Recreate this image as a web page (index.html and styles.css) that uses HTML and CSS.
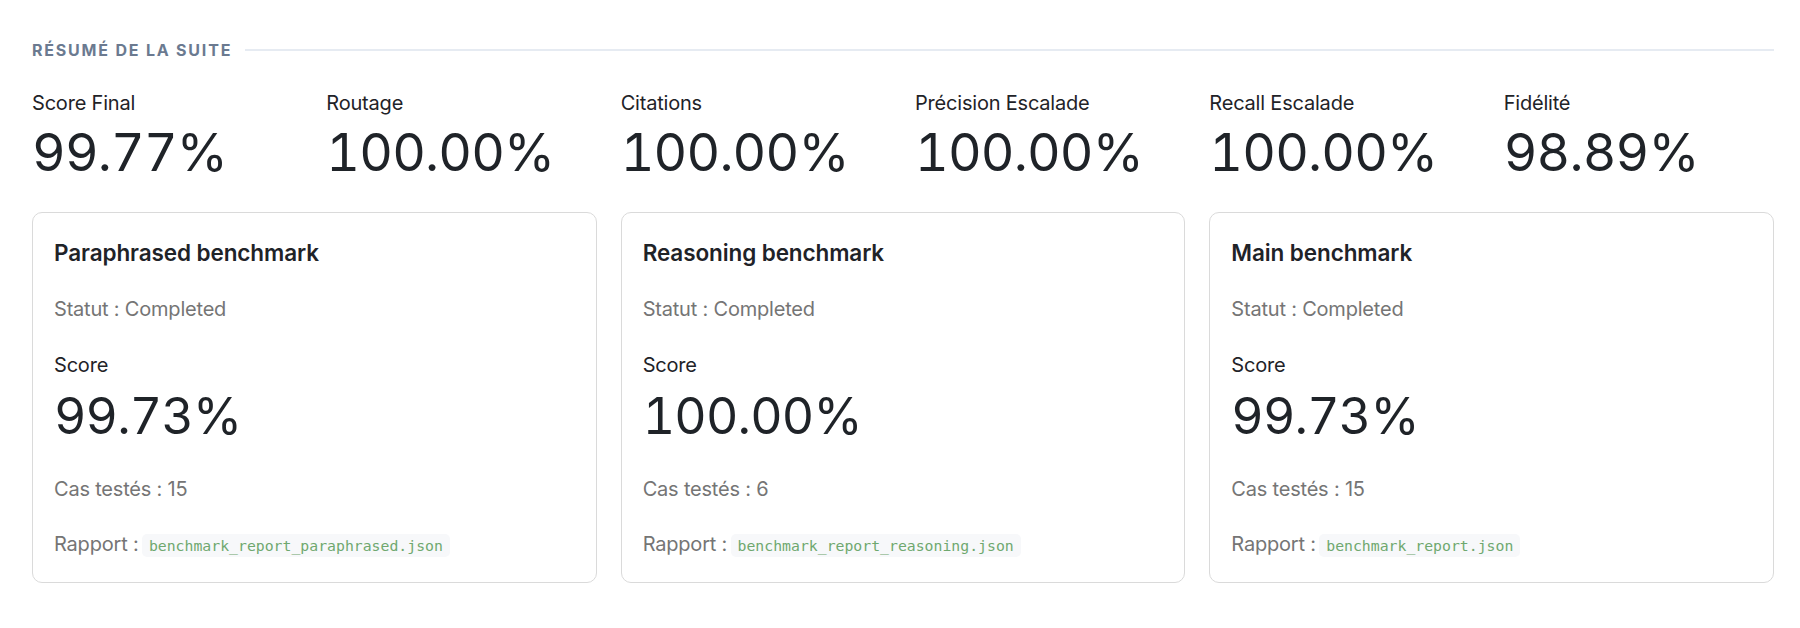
FILE: index.html
```html
<!DOCTYPE html>
<html>
  <head>
    <title>Résumé de la suite</title>
    <link rel="stylesheet" href="styles.css">
  </head>
  <body>
    <div class="suite">
      <div class="suite-header">
        <h2>Résumé de la suite</h2>
        <div class="suite-rule"></div>
      </div>

      <div class="stats">
        <div class="stat">
          <div class="stat-label">Score Final</div>
          <div class="stat-value">99.77%</div>
        </div>
        <div class="stat">
          <div class="stat-label">Routage</div>
          <div class="stat-value">100.00%</div>
        </div>
        <div class="stat">
          <div class="stat-label">Citations</div>
          <div class="stat-value">100.00%</div>
        </div>
        <div class="stat">
          <div class="stat-label">Précision Escalade</div>
          <div class="stat-value">100.00%</div>
        </div>
        <div class="stat">
          <div class="stat-label">Recall Escalade</div>
          <div class="stat-value">100.00%</div>
        </div>
        <div class="stat">
          <div class="stat-label">Fidélité</div>
          <div class="stat-value">98.89%</div>
        </div>
      </div>

      <div class="cards">
        <div class="card">
          <h3>Paraphrased benchmark</h3>
          <p class="muted status">Statut : Completed</p>
          <div class="score-label">Score</div>
          <div class="score-value">99.73%</div>
          <p class="muted cases">Cas testés : 15</p>
          <p class="muted report">Rapport : <code>benchmark_report_paraphrased.json</code></p>
        </div>
        <div class="card">
          <h3>Reasoning benchmark</h3>
          <p class="muted status">Statut : Completed</p>
          <div class="score-label">Score</div>
          <div class="score-value">100.00%</div>
          <p class="muted cases">Cas testés : 6</p>
          <p class="muted report">Rapport : <code>benchmark_report_reasoning.json</code></p>
        </div>
        <div class="card">
          <h3>Main benchmark</h3>
          <p class="muted status">Statut : Completed</p>
          <div class="score-label">Score</div>
          <div class="score-value">99.73%</div>
          <p class="muted cases">Cas testés : 15</p>
          <p class="muted report">Rapport : <code>benchmark_report.json</code></p>
        </div>
      </div>
    </div>
  </body>
</html>
```

FILE: styles.css
```css
body {
  font-family: "Inter", "Liberation Sans", sans-serif;
  background-color: #ffffff;
  color: #1f2328;
  margin: 0;
  padding: 0 26px 0 32px;
}

.suite-header {
  display: flex;
  align-items: center;
  gap: 13px;
  height: 20px;
  margin-top: 40px;
}
.suite-header h2 {
  margin: 0;
  font-size: 16px;
  font-weight: 700;
  letter-spacing: 1.8px;
  text-transform: uppercase;
  color: #6b7a90;
  white-space: nowrap;
}
.suite-rule {
  flex: 1;
  height: 2px;
  background-color: #e6ebf2;
}

/* top row of summary numbers */
.stats {
  display: grid;
  grid-template-columns: repeat(6, 1fr);
  gap: 24px;
  margin-top: 30px;
}
.stat-label {
  font-size: 20px;
  line-height: 26px;
  letter-spacing: -0.2px;
}
.stat-value {
  font-size: 52px;
  line-height: 74px;
  letter-spacing: -0.8px;
  font-variant-numeric: tabular-nums;
}

.cards {
  display: grid;
  grid-template-columns: repeat(3, 1fr);
  gap: 24px;
  margin-top: 22px;
}
.card {
  border: 1px solid #dadada;
  border-radius: 10px;
  padding: 25px 22px 23px 21px;
}
.card h3 {
  margin: 0;
  font-size: 22.5px;
  font-weight: 600;
  line-height: 30px;
  letter-spacing: -0.1px;
}
.muted {
  margin: 0;
  font-size: 20px;
  line-height: 26px;
  color: #757575;
  letter-spacing: -0.2px;
}
.status {
  margin-top: 28px;
}
.score-label {
  margin-top: 30px;
  font-size: 20px;
  line-height: 26px;
  letter-spacing: -0.2px;
}
.score-value {
  margin-top: 9px;
  font-size: 50px;
  line-height: 58px;
  letter-spacing: -0.8px;
  font-variant-numeric: tabular-nums;
}
.cases {
  margin-top: 31px;
}
.report {
  margin-top: 29px;
}
.report code {
  font-family: "DejaVu Sans Mono", "Liberation Mono", monospace;
  font-size: 14.8px;
  color: #6fa86f;
  background-color: #f7f8fa;
  border-radius: 5px;
  margin-left: -2px;
  padding: 3px 7px;
  letter-spacing: 0;
}
```
